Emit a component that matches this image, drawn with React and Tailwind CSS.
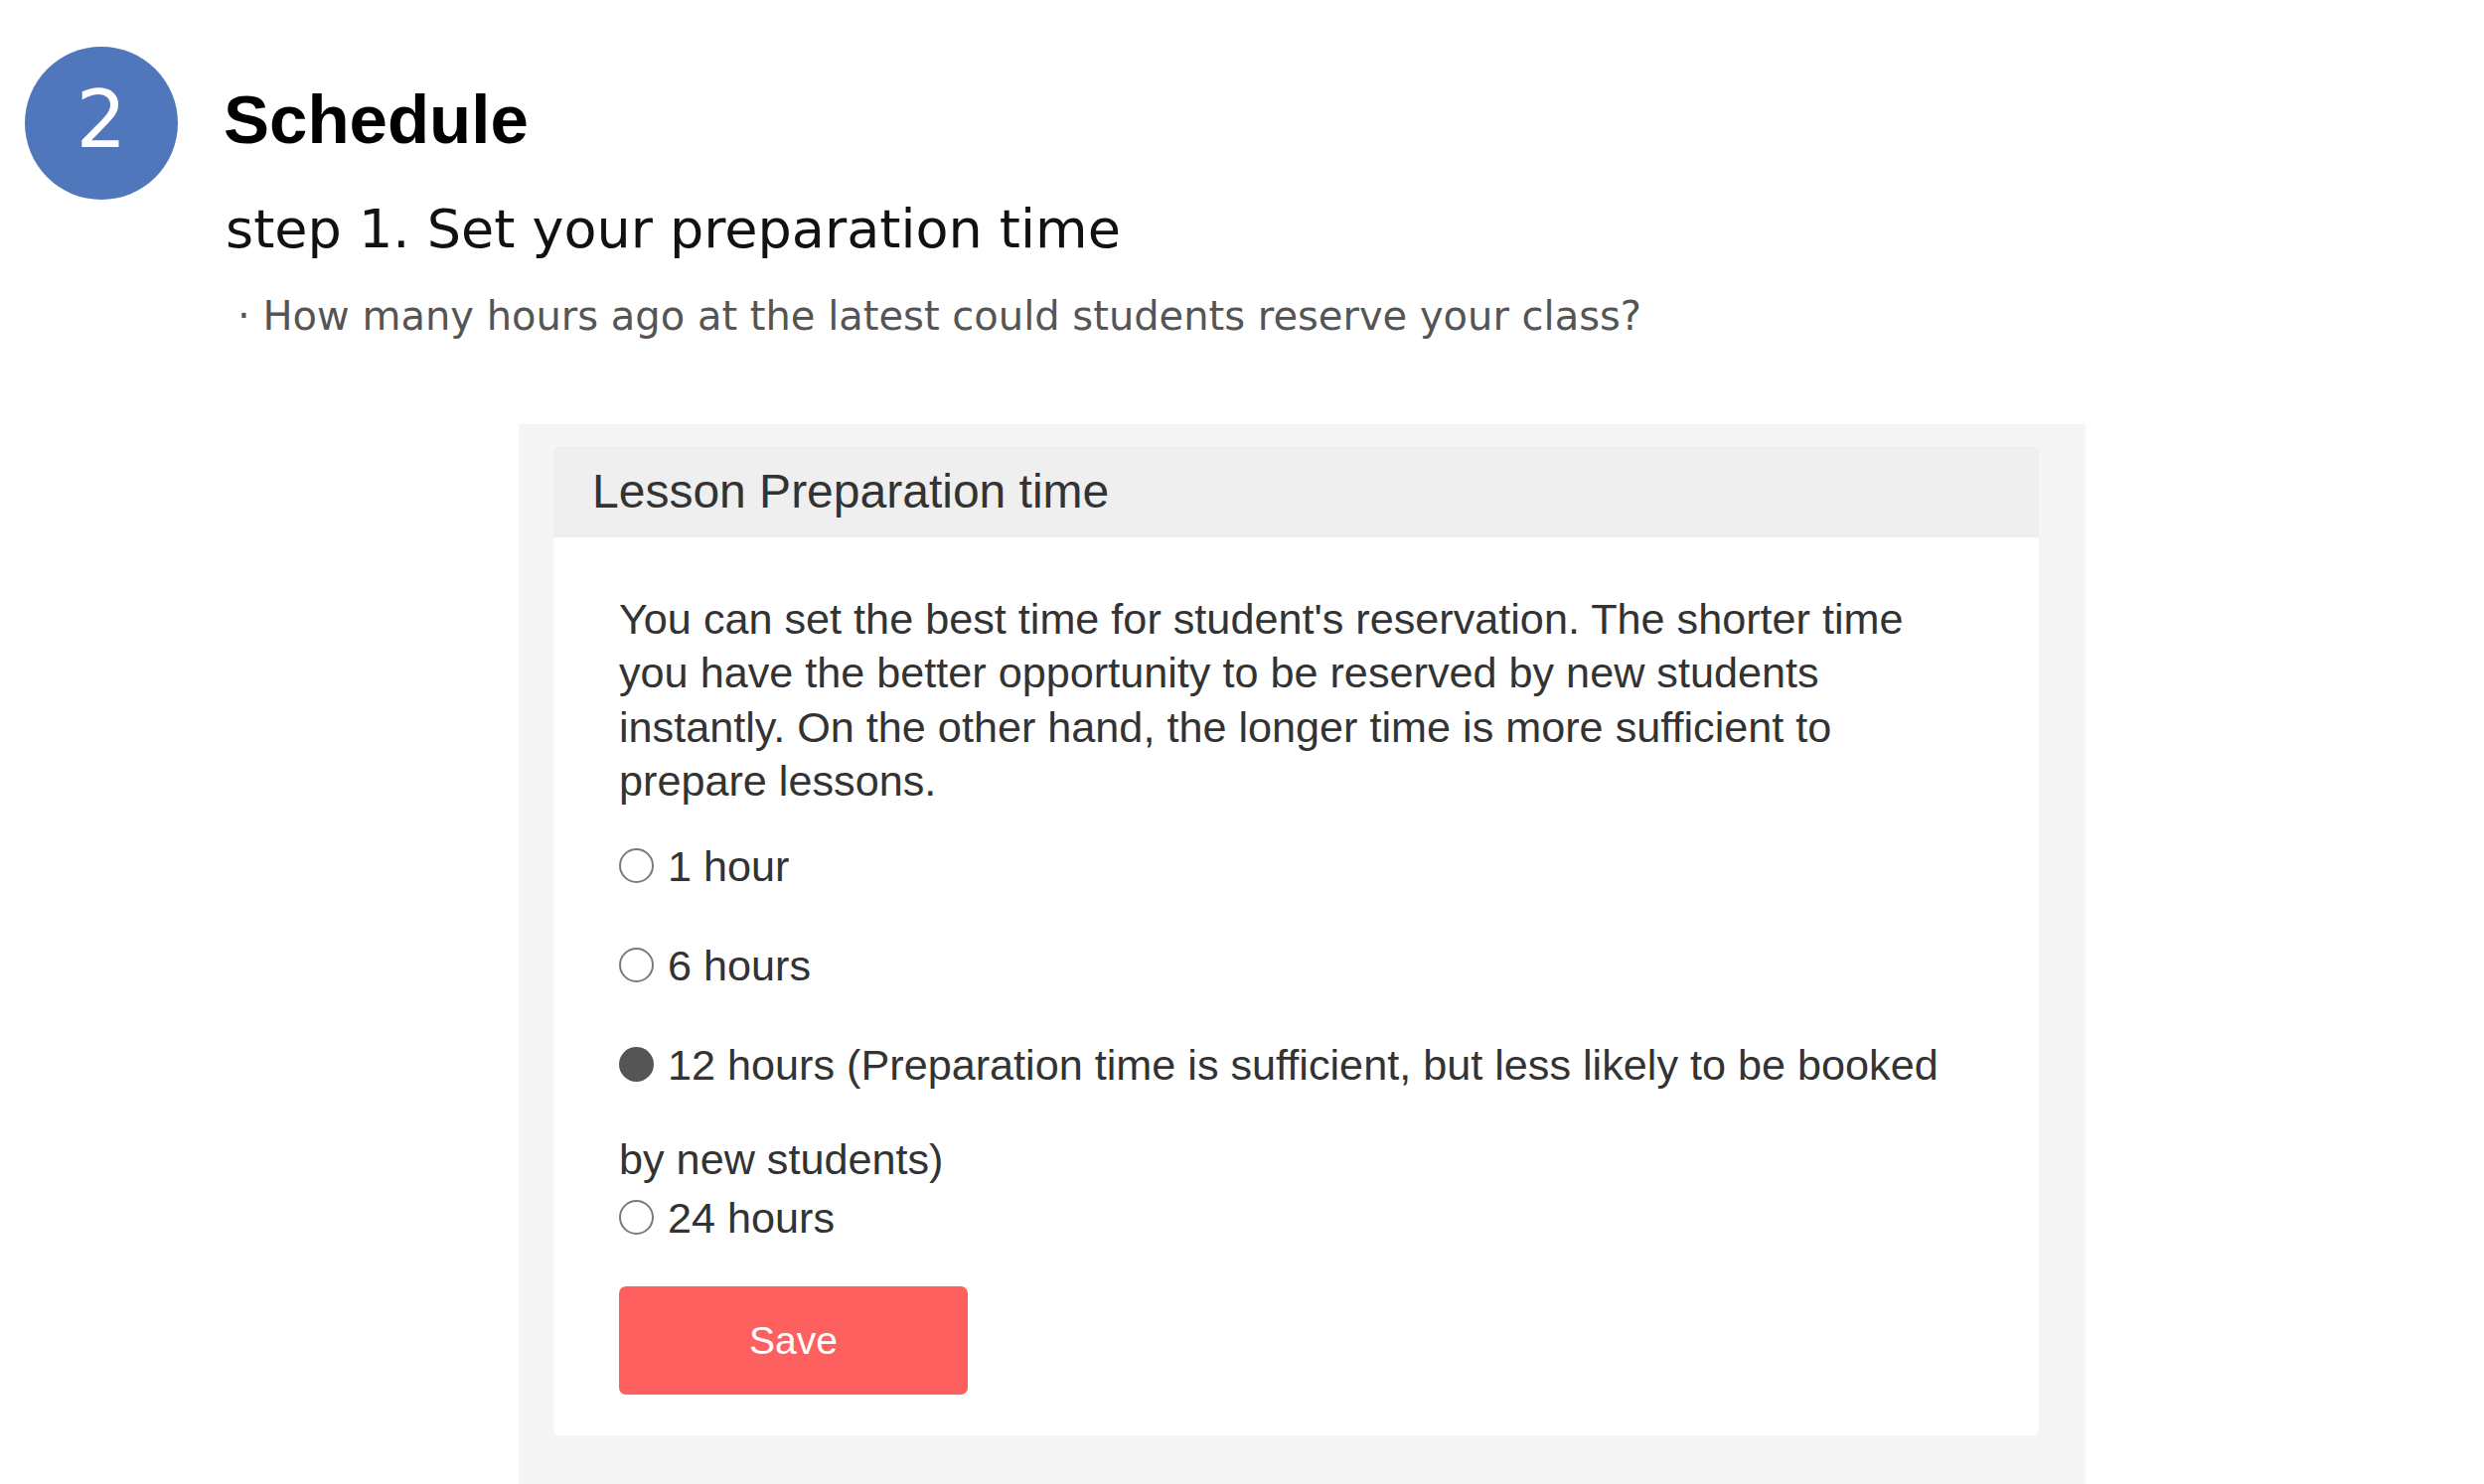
import React, { useState } from 'react';

const options = [
  { value: '1', label: '1 hour' },
  { value: '6', label: '6 hours' },
];

function Radio({ checked }) {
  return checked ? (
    <span className="inline-block w-[35px] h-[35px] rounded-full bg-[#555555] shrink-0" />
  ) : (
    <span className="inline-block w-[35px] h-[35px] rounded-full border-2 border-[#7a7a7a] bg-white shrink-0" />
  );
}

export default function App() {
  const [hours, setHours] = useState('12');

  return (
    <div className="min-h-screen bg-white pl-[25px] pt-[47px] pb-[80px]">
      {/* Step heading */}
      <div className="flex font-['DejaVu_Sans',sans-serif]">
        <div className="w-[154px] h-[154px] rounded-full bg-[#5077bb] flex items-center justify-center shrink-0">
          <span className="text-white text-[80px] leading-none pb-[6px]">2</span>
        </div>
        <div className="ml-[46px] pt-[39px]">
          <h1 className="text-[69px] leading-none font-bold text-black font-['Liberation_Sans',Arial,sans-serif]">
            Schedule
          </h1>
          <p className="mt-[49px] ml-[2px] text-[54px] leading-none text-[#111111]">
            step 1. Set your preparation time
          </p>
          <p className="mt-[40px] ml-[14px] text-[40px] leading-none text-[#555555]">
            · How many hours ago at the latest could students reserve your class?
          </p>
        </div>
      </div>

      {/* Panel */}
      <div className="mt-[89px] ml-[497px] w-[1577px] bg-[#f5f5f5] pl-[35px] pr-[47px] pt-[22px] pb-[120px] font-['Liberation_Sans',Arial,sans-serif]">
        <div className="bg-white rounded-[6px] overflow-hidden">
          <div className="h-[92px] bg-[#efefef] flex items-center pl-[39px]">
            <h2 className="text-[48px] text-[#333333] leading-none">Lesson Preparation time</h2>
          </div>

          <div className="pl-[66px] pr-[60px] pt-[55px] pb-[41px] text-[43.2px] text-[#333333]">
            <p className="leading-[54.4px]">
              You can set the best time for student's reservation. The shorter time
              <br />
              you have the better opportunity to be reserved by new students
              <br />
              instantly. On the other hand, the longer time is more sufficient to
              <br />
              prepare lessons.
            </p>

            <div className="mt-[8px]">
              {options.map((o) => (
                <label
                  key={o.value}
                  onClick={() => setHours(o.value)}
                  className="flex items-center h-[100px] leading-[100px] cursor-pointer"
                >
                  <Radio checked={hours === o.value} />
                  <span className="ml-[14px]">{o.label}</span>
                </label>
              ))}

              <label
                onClick={() => setHours('12')}
                className="flex items-center h-[100px] leading-[100px] cursor-pointer"
              >
                <Radio checked={hours === '12'} />
                <span className="ml-[14px] whitespace-nowrap">
                  12 hours (Preparation time is sufficient, but less likely to be booked
                </span>
              </label>
              <div className="mt-[18px] leading-[54px]">by new students)</div>

              <label
                onClick={() => setHours('24')}
                className="mt-[5px] flex items-center h-[54px] leading-[54px] cursor-pointer"
              >
                <Radio checked={hours === '24'} />
                <span className="ml-[14px]">24 hours</span>
              </label>
            </div>

            <button className="mt-[42px] w-[351px] h-[109px] rounded-[7px] bg-[#fe5f5f] text-white text-[39px] leading-none">
              Save
            </button>
          </div>
        </div>
      </div>
    </div>
  );
}
